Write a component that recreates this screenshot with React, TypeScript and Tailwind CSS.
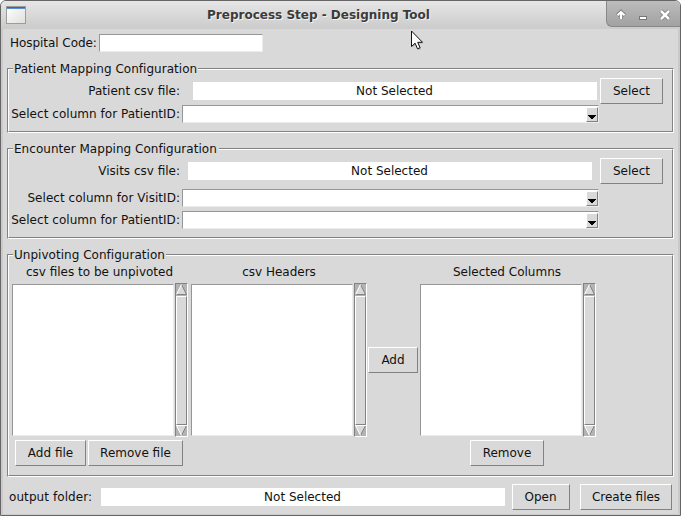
import type { ReactNode } from 'react';

const RAISED = 'border border-t-white border-l-white border-r-[#828282] border-b-[#828282]';
const SUNKEN = 'border border-t-[#969696] border-l-[#969696] border-r-[#ececec] border-b-[#ececec]';

function Button({ children, className }: { children: ReactNode; className: string }) {
  return (
    <button className={`${RAISED} flex h-[26px] shrink-0 items-center justify-center bg-[#d9d9d9] whitespace-nowrap ${className}`}>
      {children}
    </button>
  );
}

function FileField({ className }: { className: string }) {
  return <div className={`flex h-[18px] w-[404px] shrink-0 items-center justify-center bg-white pr-px ${className}`}>Not Selected</div>;
}

function ComboRow({ label, className }: { label: string; className: string }) {
  return (
    <div className={`flex h-[18px] items-center ${className}`}>
      <div className="w-[172px] shrink-0 pr-px text-right tracking-[0.04px] whitespace-nowrap">{label}</div>
      <div className={`${SUNKEN} ml-px flex h-[18px] w-[417px] shrink-0 justify-end bg-white`}>
        <div className={`${RAISED} mt-px flex h-[15px] w-[12px] items-end justify-center bg-[#d9d9d9] pb-[2px]`}>
          <svg width="8" height="4" viewBox="0 0 8 4" shapeRendering="crispEdges" className="shrink-0">
            <path d="M0 0h8v1H7v1H6v1H5v1H3V3H2V2H1V1H0z" fill="#000" />
          </svg>
        </div>
      </div>
    </div>
  );
}

function Group({ title, legendWidth, className, children }: { title: string; legendWidth: string; className: string; children: ReactNode }) {
  return (
    <section className={`relative ml-[4px] flex w-[667px] shrink-0 flex-col border border-t-[#828282] border-l-[#828282] border-r-white border-b-white ${className}`}>
      <div className="grow border border-t-white border-l-white border-r-[#828282] border-b-[#828282]">{children}</div>
      <div className={`absolute -top-[7px] left-[5px] h-[15px] bg-[#d9d9d9] pl-px leading-[15px] tracking-[0.03px] whitespace-nowrap ${legendWidth}`}>{title}</div>
    </section>
  );
}

function Arrow({ down = false }: { down?: boolean }) {
  return (
    <svg width="11" height="11" viewBox="0 0 11 11" className="block shrink-0">
      {down ? (
        <>
          <path d="M0.5 0.5h10L5.5 10.5z" fill="#d9d9d9" />
          <path d="M10.5 0.5L5.5 10.5" stroke="#828282" />
          <path d="M0 0.5h11M0.5 0.5L5.5 10.5" stroke="#fff" fill="none" />
        </>
      ) : (
        <>
          <path d="M5.5 0.5l5 10H0.5z" fill="#d9d9d9" />
          <path d="M5.5 0.5l5 10H0" stroke="#828282" fill="none" />
          <path d="M5.5 0.5L0.5 10.5" stroke="#fff" />
        </>
      )}
    </svg>
  );
}

function ListBox({ className }: { className: string }) {
  return (
    <div className={`flex h-[154px] shrink-0 ${className}`}>
      <div className={`${SUNKEN} mt-px mr-px h-[152px] grow bg-white`} />
      <div className="flex h-[154px] w-[13px] shrink-0 flex-col border border-t-[#828282] border-l-[#828282] border-r-white border-b-white bg-[#b3b3b3]">
        <Arrow />
        <div className={`${RAISED} mt-px w-full grow bg-[#d9d9d9]`} />
        <Arrow down />
      </div>
    </div>
  );
}

function TitleBar() {
  return (
    <div className="flex h-[28px] shrink-0 bg-linear-to-b from-[#e6e6e6] to-[#cbcbcb]">
      <div className="mt-[5px] ml-[5px] h-[18px] w-[20px] shrink-0 border border-[#9b9d98] bg-linear-to-br from-white to-[#dfe1dc]">
        <div className="h-[2px] border-t border-[#3e669c] bg-[#5b8ed0]" />
      </div>
      <div className="flex h-[28px] grow items-center justify-center pt-px pl-[5px] text-[12px] font-bold whitespace-nowrap text-[#3b3b3b] [text-shadow:1px_1px_0_#f2f2f2]">
        Preprocess Step - Designing Tool
      </div>
      <div className="h-[26px] w-[74px] shrink-0 rounded-bl-[6px] border-b border-l border-[#888] bg-linear-to-b from-[#bcbcbc] to-[#a2a2a2]">
        <svg width="73" height="25" viewBox="0 0 73 25" fill="none">
          <g stroke="#777" strokeWidth="4">
            <path d="M14 18v-5M10.5 14.5L14 11l3.5 3.5M54 10l8 8M62 10l-8 8" />
          </g>
          <path d="M14 18v-6" stroke="#fff" strokeWidth="2.4" />
          <path d="M10.5 14.2L14 10.8l3.5 3.4" stroke="#fff" strokeWidth="2" />
          <path d="M32 15h8v4h-8z" fill="#777" />
          <path d="M33 16h6v2h-6z" fill="#fff" />
          <path d="M54 10l8 8M62 10l-8 8" stroke="#fff" strokeWidth="2.5" />
        </svg>
      </div>
    </div>
  );
}

export default function App() {
  return (
    <div className="relative h-[516px] w-[681px] overflow-hidden bg-white font-['DejaVu_Sans',sans-serif] text-[12px] leading-[15px] text-[#111]">
      <div className="flex h-full w-full flex-col overflow-hidden rounded-t-[6px] border border-[#666] bg-[#d9d9d9]">
        <TitleBar />
        <div className="flex min-h-0 grow flex-col border-x-2 border-b border-[#cbc9c9]">
          <div className="mt-[5px] flex h-[18px] shrink-0 items-center">
            <div className="w-[96px] shrink-0 pl-[7px] tracking-[-0.05px] whitespace-nowrap">Hospital Code:</div>
            <div className={`${SUNKEN} h-[18px] w-[164px] bg-white`} />
          </div>

          <Group title="Patient Mapping Configuration" legendWidth="w-[185px]" className="mt-[16px] h-[65px]">
            <div className="mt-[8px] flex h-[26px] items-center">
              <div className="w-[172px] shrink-0 pr-px text-right">Patient csv file:</div>
              <FileField className="ml-[12px]" />
              <Button className="ml-[3px] w-[63px]">Select</Button>
            </div>
            <ComboRow label="Select column for PatientID:" className="mt-px" />
          </Group>

          <Group title="Encounter Mapping Configuration" legendWidth="w-[206px]" className="mt-[15px] h-[91px]">
            <div className="mt-[8px] flex h-[26px] items-center">
              <div className="w-[172px] shrink-0 pr-px text-right">Visits csv file:</div>
              <FileField className="ml-[7px]" />
              <Button className="ml-[8px] w-[63px]">Select</Button>
            </div>
            <ComboRow label="Select column for VisitID:" className="mt-[5px]" />
            <ComboRow label="Select column for PatientID:" className="mt-[4px]" />
          </Group>

          <Group title="Unpivoting Configuration" legendWidth="w-[153px]" className="mt-[15px] h-[223px]">
            <div className="mt-[9px] flex h-[18px] text-center leading-[15px]">
              <div className="ml-[3px] w-[176px] pr-px">csv files to be unpivoted</div>
              <div className="ml-[3px] w-[176px]">csv Headers</div>
              <div className="ml-[53px] w-[176px] pr-[2px]">Selected Columns</div>
            </div>
            <div className="flex">
              <ListBox className="ml-[3px] w-[176px]" />
              <ListBox className="ml-[3px] w-[176px]" />
              <Button className="mt-[64px] ml-px w-[50px]">Add</Button>
              <ListBox className="ml-[2px] w-[176px]" />
            </div>
            <div className="mt-[3px] flex">
              <Button className="ml-[6px] w-[71px]">Add file</Button>
              <Button className="ml-[2px] w-[95px]">Remove file</Button>
              <Button className="ml-[287px] w-[74px]">Remove</Button>
            </div>
          </Group>

          <div className="mt-[7px] flex h-[26px] shrink-0 items-center">
            <div className="w-[98px] shrink-0 pl-[6px] tracking-[0.08px] whitespace-nowrap">output folder:</div>
            <FileField className="" />
            <Button className="ml-[7px] w-[58px] pr-px">Open</Button>
            <Button className="ml-[10px] w-[92px]">Create files</Button>
          </div>
        </div>
      </div>
      <svg width="15" height="22" viewBox="0 0 15 22" className="absolute top-[30px] left-[410px]">
        <path d="M2.5 2.5v15l3.5-3 2.5 5.5 2.5-1-2.5-5.5h4.5z" fill="#888" opacity=".5" />
        <path d="M1.5 1v15.5l3.6-3.3 2.4 5.6 2.6-1.1-2.4-5.4h4.8z" fill="#fff" stroke="#111" />
      </svg>
    </div>
  );
}
